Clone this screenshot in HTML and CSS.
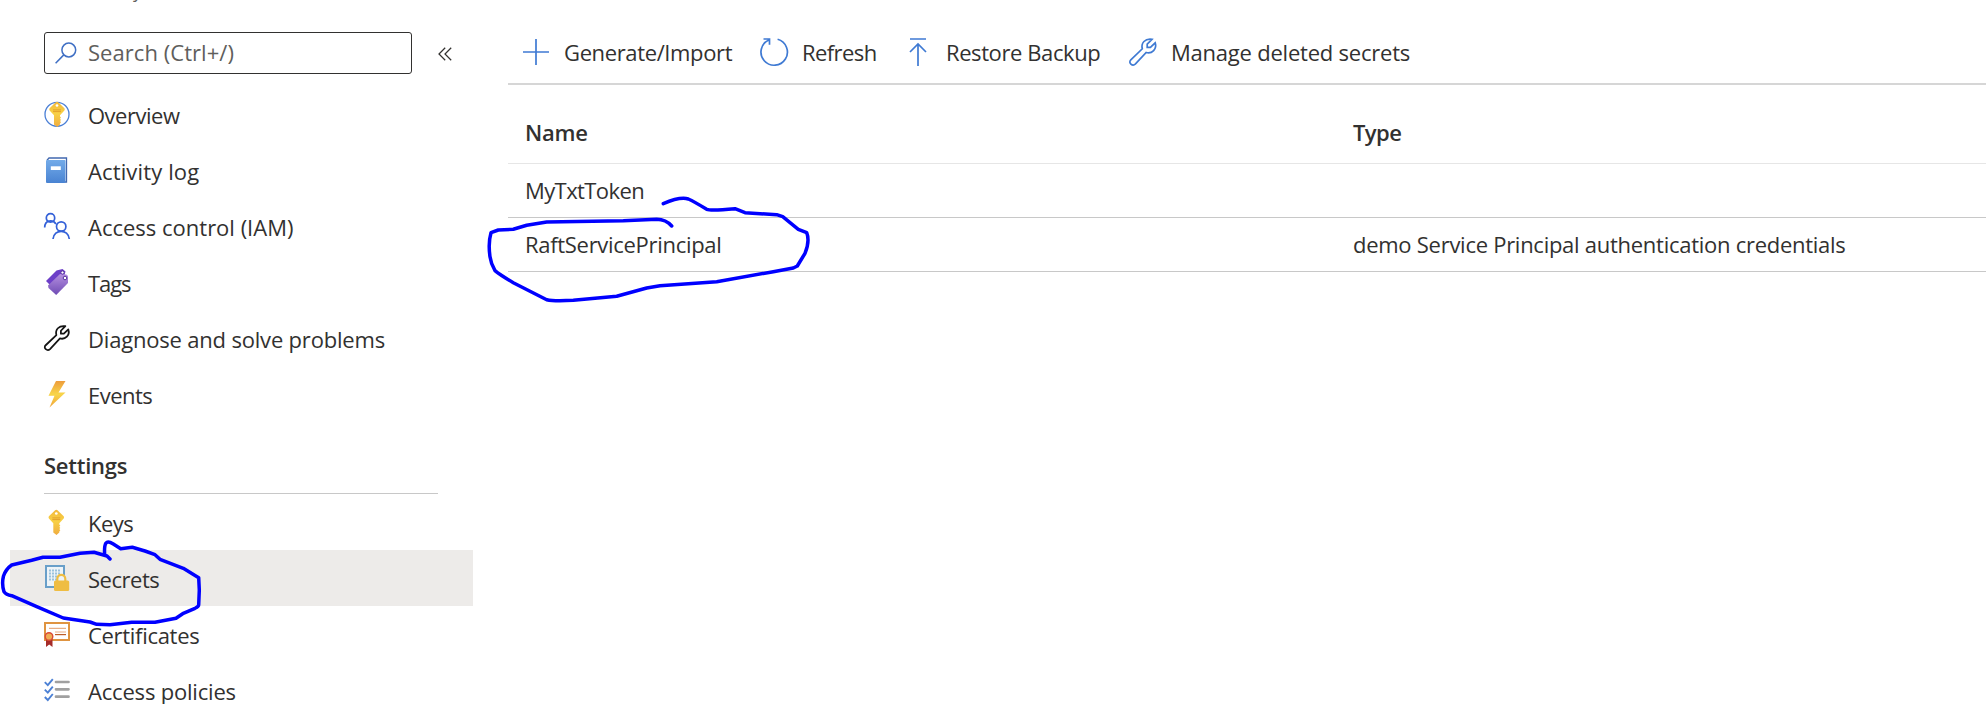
FILE: index.html
```html
<!DOCTYPE html>
<html lang="en">
<head>
<meta charset="utf-8">
<title>Key vault - Secrets</title>
<link rel="stylesheet" href="styles.css">
</head>
<body>
<div class="page">
  <aside class="sidebar">
    <div class="subtitle">y</div>
    <div class="search-row">
      <div class="search">
        <svg width="22" height="22" viewBox="0 0 22 22" fill="none" stroke="#3f6fc4" stroke-width="1.5"><circle cx="13.8" cy="8" r="6.9"/><path d="M8.8 12.9L.6 21.2"/></svg>
        <span class="t-search">Search (Ctrl+/)</span>
      </div>
      <svg class="collapse" width="14" height="14" viewBox="0 0 14 14" fill="none" stroke="#323130" stroke-width="1.25"><path d="M7.2.8L1 7l6.2 6.2M13.2.8L7 7l6.2 6.2"/></svg>
    </div>
    <nav>
      <ul class="menu">
        <li>
          <svg class="icon" viewBox="0 0 26 26"><defs><linearGradient id="gold" x1="0" y1="0" x2="0" y2="1"><stop offset="0" stop-color="#f2b83b"/><stop offset=".45" stop-color="#f8d145"/><stop offset="1" stop-color="#efac40"/></linearGradient></defs><circle cx="13" cy="13.3" r="12" fill="#fff" stroke="#4a7fd6" stroke-width="1.3"/><g id="key"><path fill="url(#gold)" d="M11.800 1.300Q13 .4 14.200 1.300L20.400 7.300Q21.200 8.400 20.400 9.500L16 14.200V15.500L17 16.500 16 17.700 17 18.900 16 20.100 17 21.300 16 22.600V23.600L13.200 26 10 23.400V14.200L5.600 9.500Q4.800 8.400 5.600 7.300z"/><path d="M9 8.900h8M9 10.600h8" stroke="#e3a02c"/><circle cx="13" cy="4.500" r="1.350" fill="#fff"/></g></svg>
          <span class="t-overview">Overview</span></li>
        <li>
          <svg class="icon" viewBox="0 0 26 26"><defs><linearGradient id="book" x1="0" y1="0" x2="0" y2="1"><stop offset="0" stop-color="#73abe9"/><stop offset="1" stop-color="#4983d2"/></linearGradient></defs><path d="M3 3.200L5 1h17.500v24H21" fill="#fff" stroke="#4168b0" stroke-width="1.300"/><rect x="2" y="3" width="19.500" height="23" rx="1" fill="url(#book)"/><path fill="#fff" d="M6.800 9.300h10v3.700h-10z"/></svg>
          <span class="t-activity">Activity log</span></li>
        <li>
          <svg class="icon" viewBox="0 0 26 26" fill="none" stroke="#3461d8" stroke-width="1.700"><circle cx="6.500" cy="4.900" r="4.200"/><circle cx="17.200" cy="13.500" r="4.700"/><path d="M.7 14.500c0-8 8.500-8 11.300-3.500M9 26c1-10.300 15.300-10.300 16.300 0"/></svg>
          <span class="t-iam">Access control (IAM)</span></li>
        <li>
          <svg class="icon" viewBox="0 0 26 26"><defs><linearGradient id="tag" x1="0" y1="0" x2="0" y2="1"><stop offset="0" stop-color="#b590e0"/><stop offset="1" stop-color="#6f4bb4"/></linearGradient></defs><path fill="#6d3fc8" d="M2 12L12.500 1.500 18.500 0l3 2.500L20 8 7 17z"/><path fill="url(#tag)" d="M4 16.500L16 5l6.500.5L24 7v7L12.200 26 4.500 19z"/><g fill="#fff" stroke="#55319d"><circle cx="18.500" cy="3.500" r="1.600"/><circle cx="21" cy="9" r="1.800"/></g></svg>
          <span class="t-tags">Tags</span></li>
        <li>
          <svg class="icon" viewBox="0 0 28 28" fill="none" stroke="#151515" stroke-width="1.900" stroke-linejoin="round"><path id="wrench" d="M1.800 21.800L13.300 10.800C11.800 5 16 .3 23 1.300L18.200 6.200V9.400h3.200L26.200 4.800C28.200 11 23 16 17.200 14.500L6.500 25.900C3.500 28.800-1.200 24.800 1.800 21.800z"/></svg>
          <span class="t-diagnose">Diagnose and solve problems</span></li>
        <li>
          <svg class="icon" viewBox="0 0 26 26"><defs><linearGradient id="bolt" x1="0" y1="0" x2="0" y2="1"><stop offset="0" stop-color="#ed9c3c"/><stop offset=".5" stop-color="#f8d548"/><stop offset="1" stop-color="#f0a43b"/></linearGradient></defs><path fill="url(#bolt)" d="M12 0h9.500L14.500 11.400H21.500L5.500 26.500 10.500 14.800H4.500z"/></svg>
          <span class="t-events">Events</span></li>
      </ul>
      <h2 class="group t-settings">Settings</h2>
      <ul class="menu">
        <li>
          <svg class="icon" viewBox="0 0 26 26"><use href="#key" x="-.7"/></svg>
          <span class="t-keys">Keys</span></li>
        <li class="selected">
          <svg class="icon" viewBox="0 0 26 26"><rect x="2" y="1" width="18" height="21" fill="#eef4f8" stroke="#699fc9" stroke-width="2"/><path d="M5 5.500h12M5 8.500h12M5 11.500h12M5 14.500h12" stroke="#9bc2dd" stroke-width="2" stroke-dasharray="2 1"/><path d="M13.300 17v-3c0-5.500 8-5.500 8 0v3" fill="#eef4f8" stroke="#efbd43" stroke-width="2.200"/><rect x="10" y="15.500" width="15.200" height="10.500" rx="1.500" fill="#efbd43"/></svg>
          <span class="t-secrets">Secrets</span></li>
        <li>
          <svg class="icon" viewBox="0 0 26 26"><path d="M1 2h24v17H1z" fill="#fff" stroke="#df9441" stroke-width="2"/><path d="M5 7.300h17M11 11h11" stroke="#e7ae85" stroke-width="1.200"/><path d="M11 13.600h11" stroke="#bd5d29" stroke-width="1.200"/><path fill="#a52c29" d="M2 18h6.500v8L5.200 23.500 2 26z"/><circle cx="5" cy="15.500" r="3.800" fill="#efad55" stroke="#d94a38" stroke-width="1.400"/></svg>
          <span class="t-certificates">Certificates</span></li>
        <li>
          <svg class="icon" viewBox="0 0 26 26" fill="none"><path d="M.8 5.200l3 3 5-6M.8 12.600l3 3 5-6M.8 20l3 3 5-6" stroke="#4b80d5" stroke-width="1.900"/><path d="M12 5h12.500M12 12.300h12.500M12 19.700h12.500" stroke="#a0a0a0" stroke-width="2.700" stroke-linecap="round"/></svg>
          <span class="t-policies">Access policies</span></li>
      </ul>
    </nav>
  </aside>

  <main class="content">
    <div class="toolbar">
      <div class="tool generate">
        <svg viewBox="0 0 28 28"><path d="M14 1v26M1 14h26"/></svg><span class="t-generate">Generate/Import</span></div>
      <div class="tool refresh">
        <svg viewBox="0 0 28 28"><path d="M17.600 1.300A13.200 13.200 0 1 1 8.800 2M3.500 1H9.500V6.800"/></svg><span class="t-refresh">Refresh</span></div>
      <div class="tool restore">
        <svg viewBox="0 0 28 28"><path d="M6 1H22M14 28V6M6 14L14 6l8 8"/></svg><span class="t-restore">Restore Backup</span></div>
      <div class="tool">
        <svg viewBox="0 0 28 28"><use href="#wrench"/></svg><span class="t-manage">Manage deleted secrets</span></div>
    </div>
    <div class="table">
      <div class="row head"><span class="t-name">Name</span><span class="t-type">Type</span></div>
      <div class="row"><span class="t-token">MyTxtToken</span></div>
      <div class="row"><span class="t-raft">RaftServicePrincipal</span><span class="t-demo">demo Service Principal authentication credentials</span></div>
    </div>
  </main>

  <svg class="ink" width="1986" height="704" viewBox="0 0 1986 704">
    <path d="M110 559L107 556 100 554 94 552.300 80 553.300 60 557.300H43L31.700 560.300 11.700 565Q6 569 3.500 576 1.500 584 4 591.700 6 595 11.700 595.700L36.700 606.700 63.300 618 75 619.700 90 622 96.700 624.300 110 624.700 131.700 622.300H155L176 618.300 182.700 613.700 195 608.300Q198.700 606.500 198.700 604.700L199.300 590 198.700 577.700 183.300 568.300 160 559.300 155 554.700 145 551 132.300 547.300 120.700 548.700 113.300 544Q108 540.500 106 543 104 546 104.700 555.300"/>
    <path d="M663.300 203.700Q680 196.500 688.300 199 694 201.500 706.700 209.300 711 210.800 735 208.700L745 212.700 776.700 214.700 782.700 216.700 798.300 229.300 806.700 232.700Q810 241 805 253.300L797.300 266 793.300 268 773.300 271.700 716.700 281.700 660 285.700 646.700 288 616.700 296.300 573.300 300.300Q554 301.500 546.700 299.700L513.300 282.700Q500 275 495 270.700 491 264 490 256.700 488 243 491 232.700L498.300 230 513.300 229.300 526.700 225.300 546.700 222 623.300 220.700 656.700 219.300Q666 219.500 671.700 226"/>
  </svg>
</div>
</body>
</html>
```
FILE: styles.css
```css
* { box-sizing: border-box; }

body {
  margin: 0;
  background: #fff;
  color: #323130;
  font-family: "Open Sans", "Noto Sans", sans-serif;
  font-size: 22px;
}

.page {
  position: relative;
  display: flex;
  width: 1986px;
  height: 704px;
  overflow: hidden;
}

.sidebar { width: 474px; flex: none; padding-left: 10px; }

.subtitle {
  height: 5px;
  margin: -11px 0 38px 123px;
  font-size: 18px;
  line-height: 5px;
  color: #605e5c;
}

.search-row { display: flex; align-items: center; height: 42px; padding-left: 34px; }

.search {
  display: flex;
  align-items: center;
  gap: 11px;
  width: 368px;
  height: 42px;
  padding-left: 10px;
  border: 1px solid #323130;
  border-radius: 3px;
  color: #605e5c;
}
.search span { padding-bottom: 2px; }

.collapse { margin: 1px 0 0 26px; }

.menu { list-style: none; margin: 0; padding: 0; }
.search-row + nav { padding-top: 12px; }

.menu li {
  display: flex;
  align-items: center;
  gap: 18px;
  width: 463px;
  height: 56px;
  padding-left: 34px;
}
.menu li span { padding-top: 2px; white-space: nowrap; }
.menu .selected { background: #edebe9; }
.icon { width: 26px; height: 26px; flex: none; overflow: visible; }

.group {
  width: 394px;
  height: 72px;
  margin: 0 0 0 34px;
  padding-top: 21px;
  border-bottom: 1px solid #c8c8c8;
  font-size: 22px;
  font-weight: 600;
  line-height: 44px;
}

.content { flex: 1; padding-left: 34px; }

.toolbar {
  display: flex;
  align-items: center;
  height: 85px;
  padding: 20px 0 0 14px;
  border-bottom: 2px solid #d6d6d6;
}
.tool { display: flex; align-items: center; gap: 14px; white-space: nowrap; }
.tool svg {
  width: 28px;
  height: 28px;
  flex: none;
  fill: none;
  stroke: #3f7ad3;
  stroke-width: 1.7;
  overflow: visible;
}
.generate { width: 238px; }
.refresh { width: 144px; }
.restore { width: 225px; }

.row {
  display: grid;
  grid-template-columns: 828px 1fr;
  align-items: center;
  height: 54px;
  padding: 0 0 1px 17px;
  border-bottom: 1px solid #c8c8c8;
}
.head {
  height: 79px;
  padding-top: 17px;
  border-color: #e6e6e6;
  font-weight: 600;
}

.ink {
  position: absolute;
  inset: 0;
  fill: none;
  stroke: #00f;
  stroke-width: 3.5;
  stroke-linecap: round;
  stroke-linejoin: round;
  pointer-events: none;
}

/* Label tracking */
.t-search { letter-spacing: .05px; }
.t-overview { letter-spacing: -.49px; }
.t-activity { letter-spacing: .13px; }
.t-tags { letter-spacing: -1.1px; }
.t-diagnose { letter-spacing: -.19px; }
.t-events { letter-spacing: -.54px; }
.t-settings { letter-spacing: -.26px; }
.t-keys { letter-spacing: -.57px; }
.t-secrets { letter-spacing: -.48px; }
.t-certificates { letter-spacing: -.3px; }
.t-policies { letter-spacing: -.19px; }
.t-generate { letter-spacing: -.37px; }
.t-refresh { letter-spacing: -.57px; }
.t-restore { letter-spacing: -.41px; }
.t-manage { letter-spacing: -.22px; }
.t-name { letter-spacing: -.23px; }
.t-token { letter-spacing: -.6px; }
.t-raft { letter-spacing: -.3px; }
.t-type { letter-spacing: -.57px; }
.t-demo { letter-spacing: -.27px; }
```
